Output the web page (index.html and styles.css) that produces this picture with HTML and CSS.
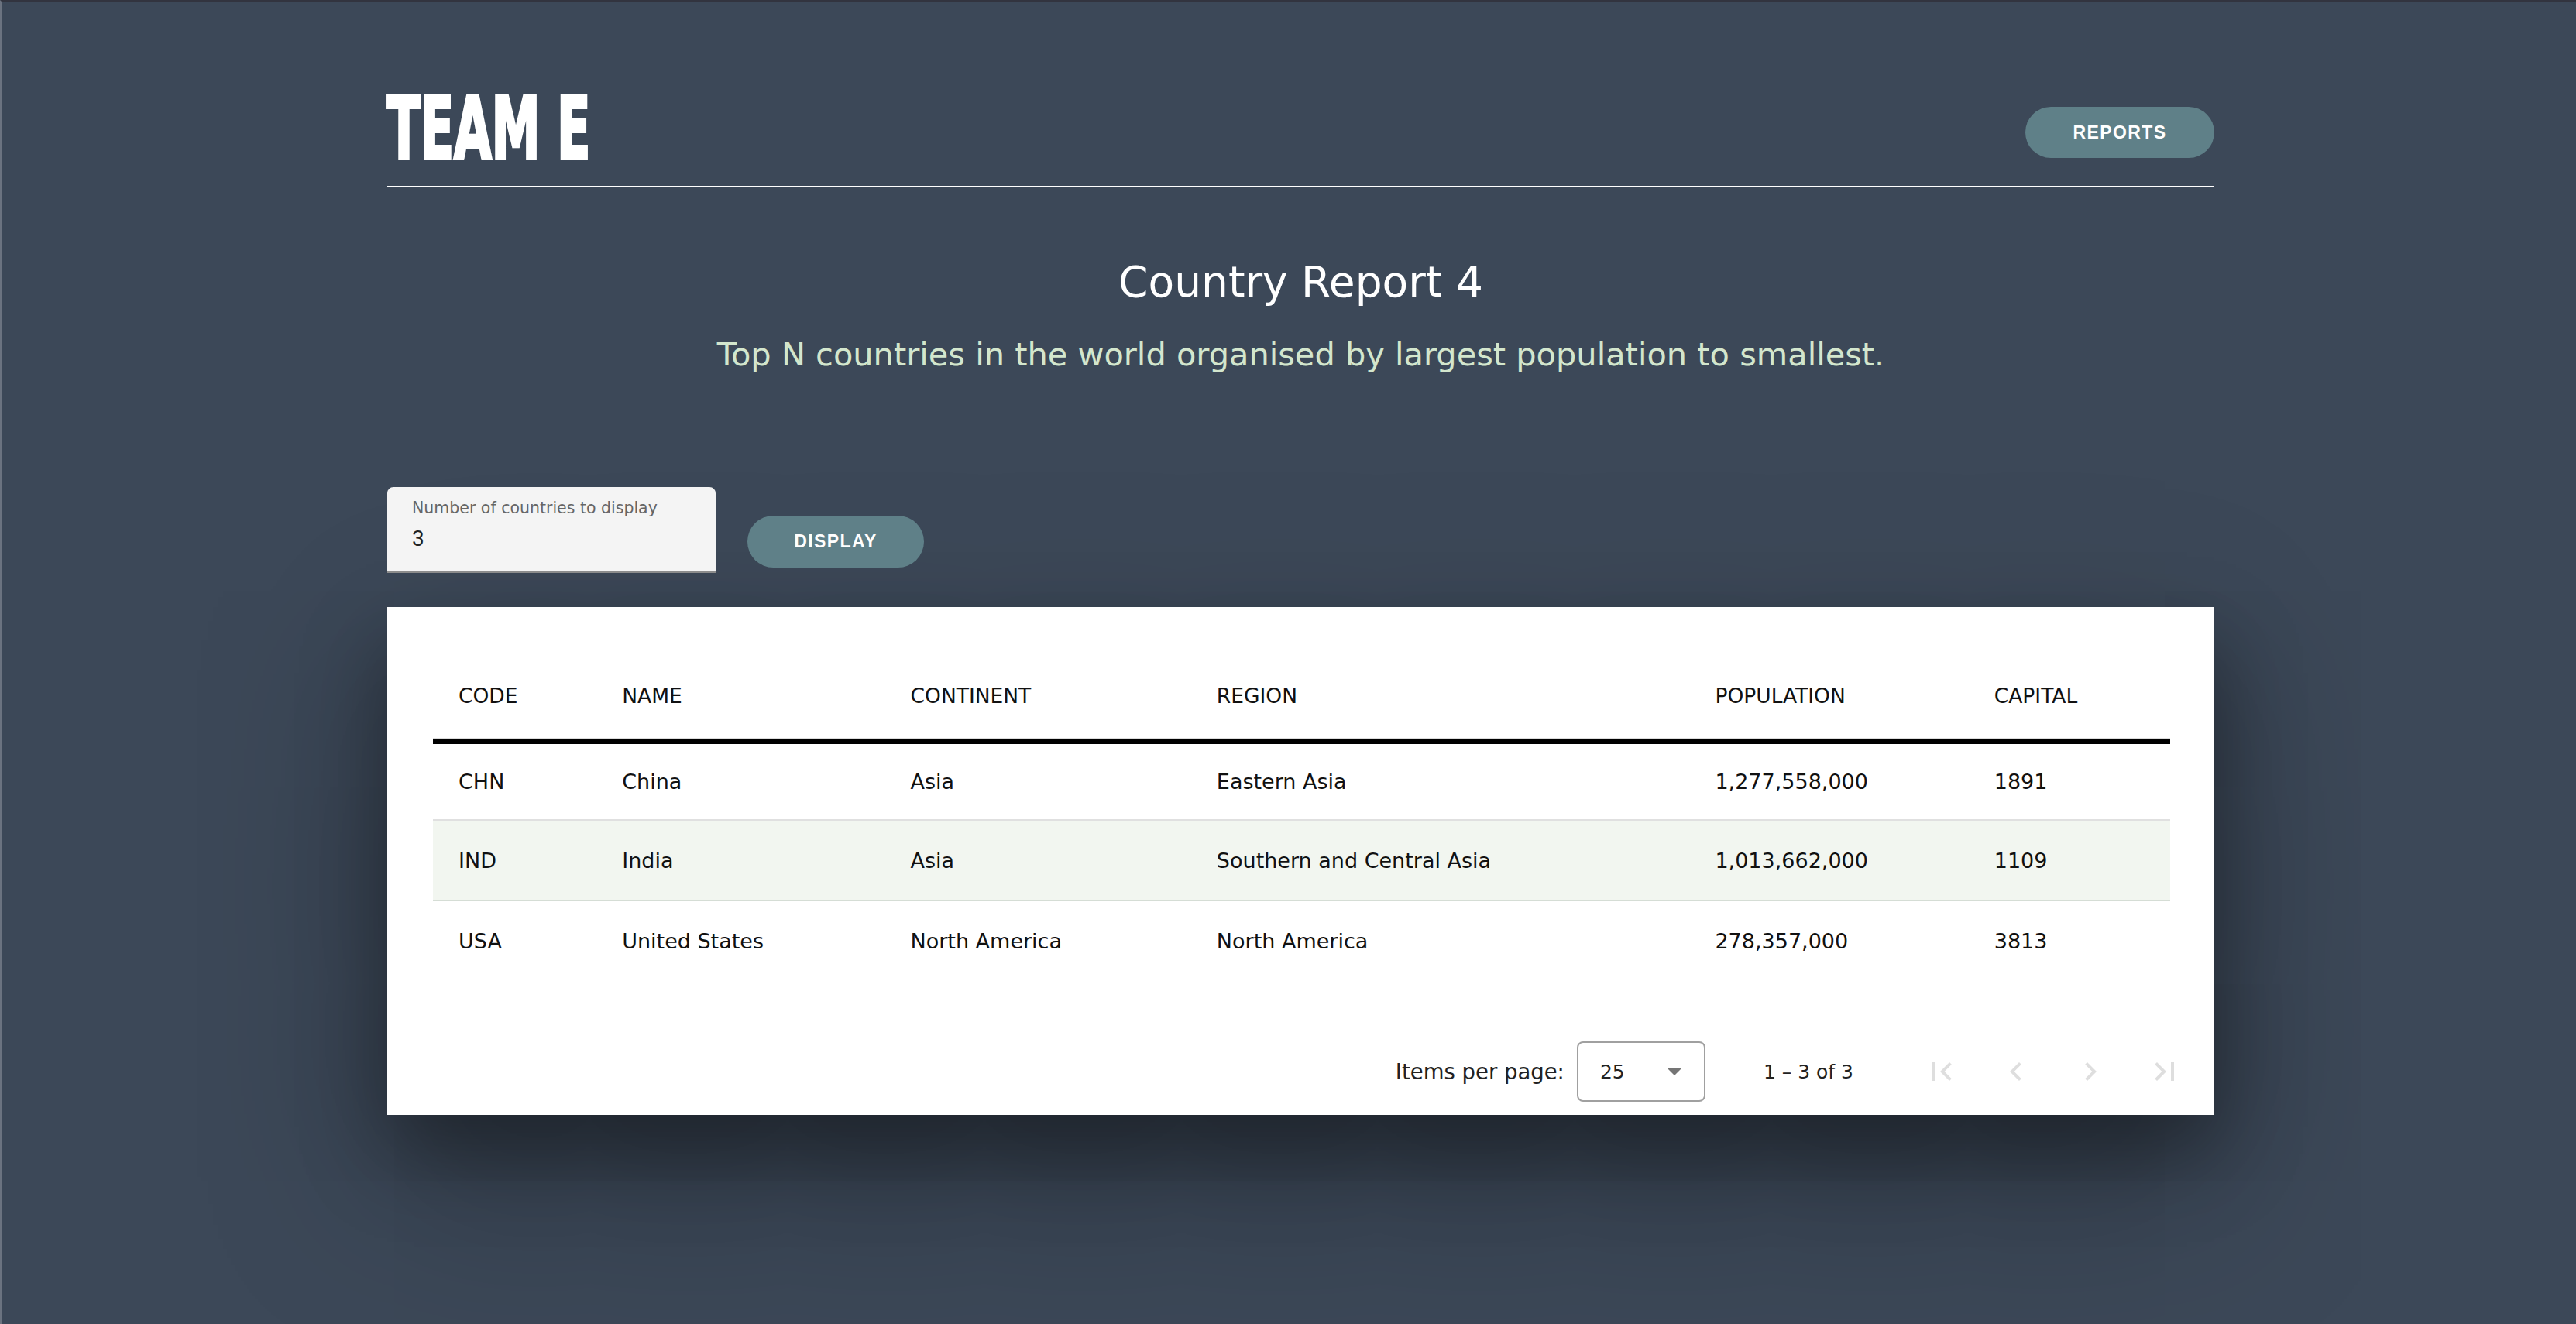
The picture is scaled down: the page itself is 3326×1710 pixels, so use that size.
FILE: index.html
```html
<!DOCTYPE html>
<html lang="en">
<head>
<meta charset="utf-8">
<title>Team E - Country Report 4</title>
<link rel="stylesheet" href="styles.css">
</head>
<body>
<div class="page">
  <header class="topbar">
    <h1 class="brand">TEAM E</h1>
    <a class="btn btn-reports" href="#">REPORTS</a>
  </header>

  <section class="intro">
    <h2 class="intro-title">Country Report 4</h2>
    <p class="intro-sub">Top N countries in the world organised by largest population to smallest.</p>
  </section>

  <form class="controls">
    <div class="field">
      <span class="field-label">Number of countries to display</span>
      <span class="field-value">3</span>
    </div>
    <button class="btn btn-display" type="button">DISPLAY</button>
  </form>

  <div class="card">
    <div class="table-wrap">
      <table class="grid">
        <colgroup>
          <col class="c-code"><col class="c-name"><col class="c-cont"><col class="c-region"><col class="c-pop"><col class="c-cap">
        </colgroup>
        <thead>
          <tr><th>CODE</th><th>NAME</th><th>CONTINENT</th><th>REGION</th><th>POPULATION</th><th>CAPITAL</th></tr>
        </thead>
        <tbody>
          <tr><td>CHN</td><td>China</td><td>Asia</td><td>Eastern Asia</td><td>1,277,558,000</td><td>1891</td></tr>
          <tr class="alt"><td>IND</td><td>India</td><td>Asia</td><td>Southern and Central Asia</td><td>1,013,662,000</td><td>1109</td></tr>
          <tr><td>USA</td><td>United States</td><td>North America</td><td>North America</td><td>278,357,000</td><td>3813</td></tr>
        </tbody>
      </table>
    </div>
    <div class="paginator">
      <span class="pg-label">Items per page:</span>
      <div class="pg-select"><span>25</span><span class="pg-arrow"></span></div>
      <span class="pg-range">1 – 3 of 3</span>
      <button class="pg-btn" type="button" aria-label="First page"><svg viewBox="0 0 24 24"><path d="M18.41 16.59L13.82 12l4.59-4.59L17 6l-6 6 6 6zM6 6h2v12H6z"/></svg></button>
      <button class="pg-btn" type="button" aria-label="Previous page"><svg viewBox="0 0 24 24"><path d="M15.41 7.41L14 6l-6 6 6 6 1.41-1.41L10.83 12z"/></svg></button>
      <button class="pg-btn" type="button" aria-label="Next page"><svg viewBox="0 0 24 24"><path d="M10 6L8.59 7.41 13.17 12l-4.58 4.59L10 18l6-6z"/></svg></button>
      <button class="pg-btn" type="button" aria-label="Last page"><svg viewBox="0 0 24 24"><path d="M5.59 7.41L10.18 12l-4.59 4.59L7 18l6-6-6-6zM16 6h2v12h-2z"/></svg></button>
    </div>
  </div>
</div>
</body>
</html>
```
FILE: styles.css
```css
* { box-sizing: border-box; }
html { margin: 0; padding: 0; height: 1710px; overflow: hidden; }
body {
  margin: 0;
  padding: 0;
  height: 1710px;
  background: #3c4858;
  border-top: 2px solid #32343f;
  border-left: 2px solid #6b7380;
  font-family: "DejaVu Sans", "Noto Sans", sans-serif;
  color: #1f1f1f;
  overflow: hidden;
}
.page {
  width: 2359px;
  margin-left: 498px;
}
.topbar {
  display: flex;
  justify-content: space-between;
  align-items: center;
  height: 240px;
  padding-top: 90px;
  border-bottom: 2px solid #ffffff;
}
.brand {
  margin: 0;
  font-family: "DejaVu Sans Condensed", "DejaVu Sans", sans-serif;
  font-stretch: condensed;
  font-weight: 700;
  font-size: 112px;
  line-height: 1;
  color: #fff;
  -webkit-text-stroke: 4px #fff;
  transform: scaleX(0.625);
  transform-origin: left center;
  white-space: nowrap;
}
.btn {
  display: inline-flex;
  align-items: center;
  justify-content: center;
  border: 0;
  border-radius: 40px;
  background: #5f8088;
  color: #fff;
  font-family: "Liberation Sans", Arial, sans-serif;
  font-weight: 700;
  font-size: 23px;
  letter-spacing: 1.4px;
  text-decoration: none;
}
.btn-reports {
  width: 244px;
  height: 66px;
  margin-top: 10px;
}
.intro { text-align: center; padding-top: 87px; }
.intro-title {
  margin: 0;
  font-weight: 400;
  font-size: 55px;
  line-height: 70px;
  color: #fff;
}
.intro-sub {
  margin: 29px 0 0;
  font-size: 41.5px;
  line-height: 60px;
  color: #d3e6cd;
}
.controls {
  display: flex;
  align-items: flex-end;
  gap: 41px;
  margin-top: 141px;
}
.field {
  width: 424px;
  height: 111px;
  background: #f4f4f4;
  border-radius: 8px 8px 0 0;
  border-bottom: 2px solid #8c8c8c;
  padding: 12px 32px 0;
  display: flex;
  flex-direction: column;
}
.field-label { font-size: 20.5px; color: #666; line-height: 30px; }
.field-value { font-family: Roboto, sans-serif; font-size: 28px; color: #222; line-height: 44px; margin-top: 3px; }
.btn-display { width: 228px; height: 67px; margin-bottom: 7px; }
.card {
  margin-top: 44px;
  background: #fff;
  box-shadow: 0 50px 100px rgba(0,0,0,0.35), 0 80px 240px rgba(0,0,0,0.35);
}
.table-wrap { padding: 61px 57px 0 59px; }
.grid { width: 100%; border-collapse: separate; border-spacing: 0; table-layout: fixed; }
.c-code { width: 211px; }
.c-name { width: 372px; }
.c-cont { width: 395px; }
.c-region { width: 643px; }
.c-pop { width: 360px; }
.c-cap { width: 260px; }
.grid th, .grid td {
  text-align: left;
  vertical-align: middle;
  padding: 0 0 0 33px;
  font-weight: 400;
  color: #111;
  white-space: nowrap;
}
.grid th {
  height: 116px;
  font-size: 26.5px;
  padding-bottom: 4px;
  border-bottom: 6px solid #000;
  box-shadow: inset 0 -2px 0 #dcdcdc;
}
.grid td { height: 104px; font-size: 27px; border-bottom: 2px solid #e0e0e0; }
.grid tbody tr:first-child td { height: 99px; }
.grid tbody tr:last-child td { height: 102px; border-bottom: 0; }
.grid tr.alt td { background: #f2f6f0; border-bottom-color: #d5ddd5; }
.paginator {
  display: flex;
  align-items: center;
  justify-content: flex-end;
  height: 112px;
  margin-top: 62px;
  padding-right: 24px;
  font-size: 25px;
  color: #222;
}
.pg-label { white-space: nowrap; font-size: 27.5px; }
.pg-select {
  margin-left: 16px;
  width: 166px;
  height: 78px;
  border: 2px solid #a0a0a0;
  border-radius: 8px;
  display: flex;
  align-items: center;
  justify-content: space-between;
  padding: 0 29px 0 28px;
  font-size: 25px;
}
.pg-arrow {
  width: 0; height: 0;
  border-left: 9px solid transparent;
  border-right: 9px solid transparent;
  border-top: 9px solid #757575;
}
.pg-range { margin: 0 74px 0 75px; white-space: nowrap; }
.pg-btn {
  width: 80px; height: 80px;
  border: 0; background: transparent; padding: 16px;
  margin-left: 16px;
}
.pg-range + .pg-btn { margin-left: 0; }
.pg-btn svg { width: 48px; height: 48px; fill: #dedede; display: block; }
```
